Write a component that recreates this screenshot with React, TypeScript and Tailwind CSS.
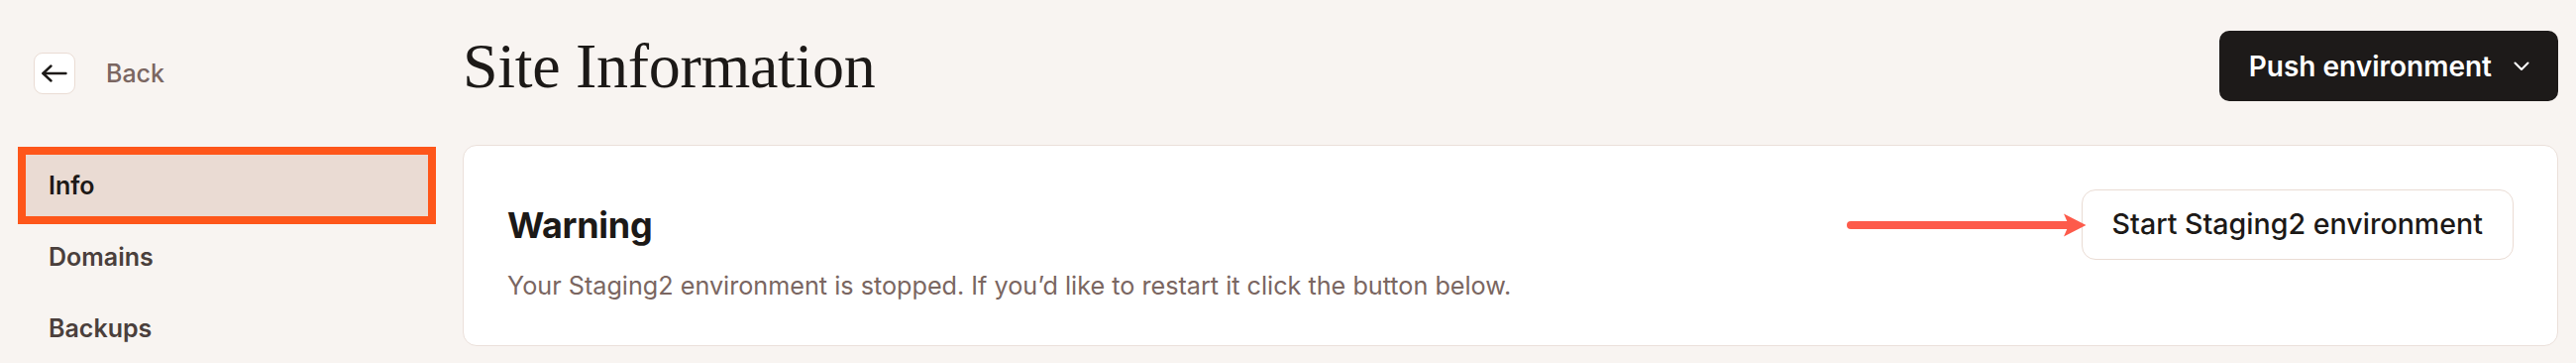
import React from 'react';

export default function App() {
  const navItems = ['Info', 'Domains', 'Backups'];
  const active = 'Info';

  return (
    <div className="w-[2600px] h-[366px] overflow-hidden bg-[#f8f4f1] font-['Inter',sans-serif] antialiased flex pl-[26px] pr-[18px]">
      {/* Sidebar */}
      <aside className="w-[406px] shrink-0 pt-[53px]">
        <div className="flex items-center h-[42px] pl-[8px] gap-[31px]">
          <button className="w-[42px] h-[42px] rounded-[9px] bg-white border border-[#eadcd4] flex items-center justify-center">
            <svg width="26" height="18" viewBox="0 0 26 18" fill="none" stroke="#1c1917" strokeWidth="2.4" strokeLinecap="round" strokeLinejoin="round">
              <path d="M1.5 9H24.5" />
              <path d="M9.5 1.5L1.5 9l8 7.5" />
            </svg>
          </button>
          <span className="text-[25px] font-medium text-[#7a6661] leading-none">Back</span>
        </div>

        <nav className="mt-[61px] flex flex-col gap-[10px]">
          {navItems.map((item) => (
            <div
              key={item}
              className={`h-[62px] flex items-center pl-[23px] text-[25px] font-semibold leading-none ${
                item === active
                  ? 'bg-[#eadbd3] text-[#1c1917] outline-8 outline-[#fe561a]'
                  : 'text-[#4a3f3c]'
              }`}
            >
              {item}
            </div>
          ))}
        </nav>
      </aside>

      {/* Main */}
      <main className="flex-1 ml-[35px] pt-[31px]">
        <header className="flex items-center justify-between h-[71px]">
          <h1 className="font-['Liberation_Serif',serif] text-[64px] leading-none font-normal text-[#1c1917] tracking-[-0.3px]">
            Site Information
          </h1>
          <button className="h-[71px] rounded-[10px] bg-[#1d1a19] text-white flex items-center pl-[30px] pr-[29px] gap-[22px]">
            <span className="text-[28px] font-semibold leading-none">Push environment</span>
            <svg width="16" height="10" viewBox="0 0 16 10" fill="none" stroke="white" strokeWidth="2" strokeLinecap="round" strokeLinejoin="round">
              <path d="M1.5 1.5L8 8l6.5-6.5" />
            </svg>
          </button>
        </header>

        <section className="mt-[44px] bg-white border border-[#ebe0da] rounded-[14px] pt-[44px] pb-[42px] px-[44px]">
          <div className="flex items-center justify-between h-[71px]">
            <h2 className="text-[36px] font-bold text-[#1c1917] leading-none tracking-[-0.3px]">Warning</h2>
            <div className="relative">
              {/* annotation arrow */}
              <svg
                className="absolute right-[calc(100%-5px)] top-1/2 -translate-y-1/2"
                width="242"
                height="24"
                viewBox="0 0 242 24"
              >
                <line x1="4" y1="12" x2="224" y2="12" stroke="#fd5b4b" strokeWidth="8" strokeLinecap="round" />
                <path d="M219 0.5L241.5 12L219 23.5L224 12Z" fill="#fd5b4b" />
              </svg>
              <button className="h-[71px] rounded-[14px] bg-white border border-[#eadcd4] px-[30px] text-[28.6px] font-medium text-[#1c1917] leading-none">
                Start Staging2 environment
              </button>
            </div>
          </div>
          <p className="mt-[8px] text-[25.2px] leading-[36px] text-[#7a6661]">
            Your Staging2 environment is stopped. If you’d like to restart it click the button below.
          </p>
        </section>
      </main>
    </div>
  );
}
